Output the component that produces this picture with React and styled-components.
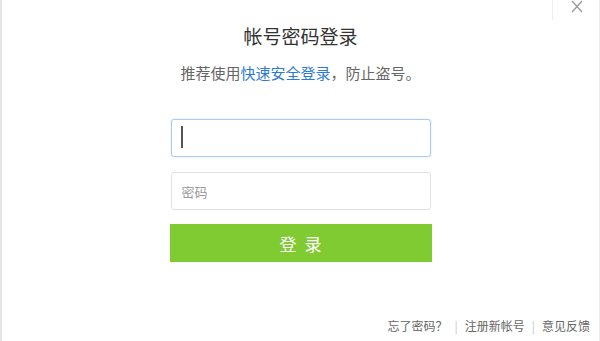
import React, { useState } from 'react';
import styled, { createGlobalStyle } from 'styled-components';

const GlobalStyle = createGlobalStyle`
  html, body {
    margin: 0;
    padding: 0;
    background: #fff;
    font-family: "Noto Sans CJK SC", "Liberation Sans", sans-serif;
  }
`;

const Dialog = styled.div` /* 로그인 창 */
  position: relative;
  width: 600px;
  height: 341px;
  box-sizing: border-box;
  border-left: 2px solid #e4e6e8;
  border-right: 1px solid #ececec;
  background: #fff;
  display: flex;
  flex-direction: column;
  align-items: center;
`;

const CloseBtn = styled.button` /* 닫기 */
  position: absolute;
  top: 0;
  right: 14px;
  width: 16px;
  height: 14px;
  padding: 0;
  border: none;
  background: none;
  cursor: pointer;
`;

const TopLine = styled.div`
  position: absolute;
  top: 0;
  right: 46px;
  width: 1px;
  height: 20px;
  background: #eeeeee;
`;

const Title = styled.div`
  margin-top: 22px;
  font-size: 19px;
  line-height: 28px;
  color: #333;
`;

const Sub = styled.div`
  margin-top: 13px;
  font-size: 15px;
  line-height: 20px;
  color: #666;
`;

const Link = styled.a`
  color: #2d7bd0;
  text-decoration: none;
`;

const Form = styled.div`
  margin-top: 36px;
  width: 262px;
  display: flex;
  flex-direction: column;
  align-items: center;
`;

const Field = styled.div`
  position: relative;
  margin-bottom: ${p => p.$gap || 0}px;
`;

const Input = styled.input`
  display: block;
  box-sizing: border-box;
  width: 260px;
  height: 38px;
  padding: 0 10px;
  border: 1px solid ${p => (p.$focus ? '#a8cdef' : '#dfe2e6')};
  border-radius: 3px;
  font-size: 13px;
  font-family: inherit;
  color: #333;
  outline: none;
  box-shadow: ${p => (p.$focus ? '0 0 2px rgba(120,170,230,0.35)' : 'none')};
  caret-color: transparent;

  &::placeholder {
    color: #999;
  }
`;

const Caret = styled.span` /* 입력 커서 */
  position: absolute;
  left: 10px;
  top: 7px;
  width: 2px;
  height: 22px;
  background: #555;
  pointer-events: none;
`;

const LoginBtn = styled.button`
  width: 262px;
  height: 38px;
  border: none;
  background: #80cb31;
  color: #fff;
  font-size: 17px;
  font-family: inherit;
  letter-spacing: 8px;
  text-indent: 8px;
  cursor: pointer;
`;

const Footer = styled.div`
  position: absolute;
  right: 9px;
  bottom: 7px;
  display: flex;
  align-items: center;
  font-size: 12px;
  color: #666;
`;

const Sep = styled.span`
  color: #c8c8c8;
  margin: 0 7px;
`;

export default function App() {
  const [id, setId] = useState('');
  const [pw, setPw] = useState('');

  return (
    <>
      <GlobalStyle />
      <Dialog>
        <TopLine />
        <CloseBtn aria-label="关闭">
          <svg width="16" height="14" viewBox="0 0 16 14">
            <path d="M3 1 L13 12 M13 1 L3 12" stroke="#9a9a9a" strokeWidth="1.3" fill="none" />
          </svg>
        </CloseBtn>

        <Title>帐号密码登录</Title>
        <Sub>
          推荐使用<Link href="#">快速安全登录</Link>，防止盗号。
        </Sub>

        <Form>
          <Field $gap={15}>
            <Input $focus value={id} onChange={e => setId(e.target.value)} />
            {id === '' && <Caret />}
          </Field>
          <Field $gap={14}>
            <Input type="password" placeholder="密码" value={pw} onChange={e => setPw(e.target.value)} />
          </Field>
          <LoginBtn>登录</LoginBtn>
        </Form>

        <Footer>
          <span>忘了密码？</span>
          <Sep>|</Sep>
          <span>注册新帐号</span>
          <Sep>|</Sep>
          <span>意见反馈</span>
        </Footer>
      </Dialog>
    </>
  );
}
